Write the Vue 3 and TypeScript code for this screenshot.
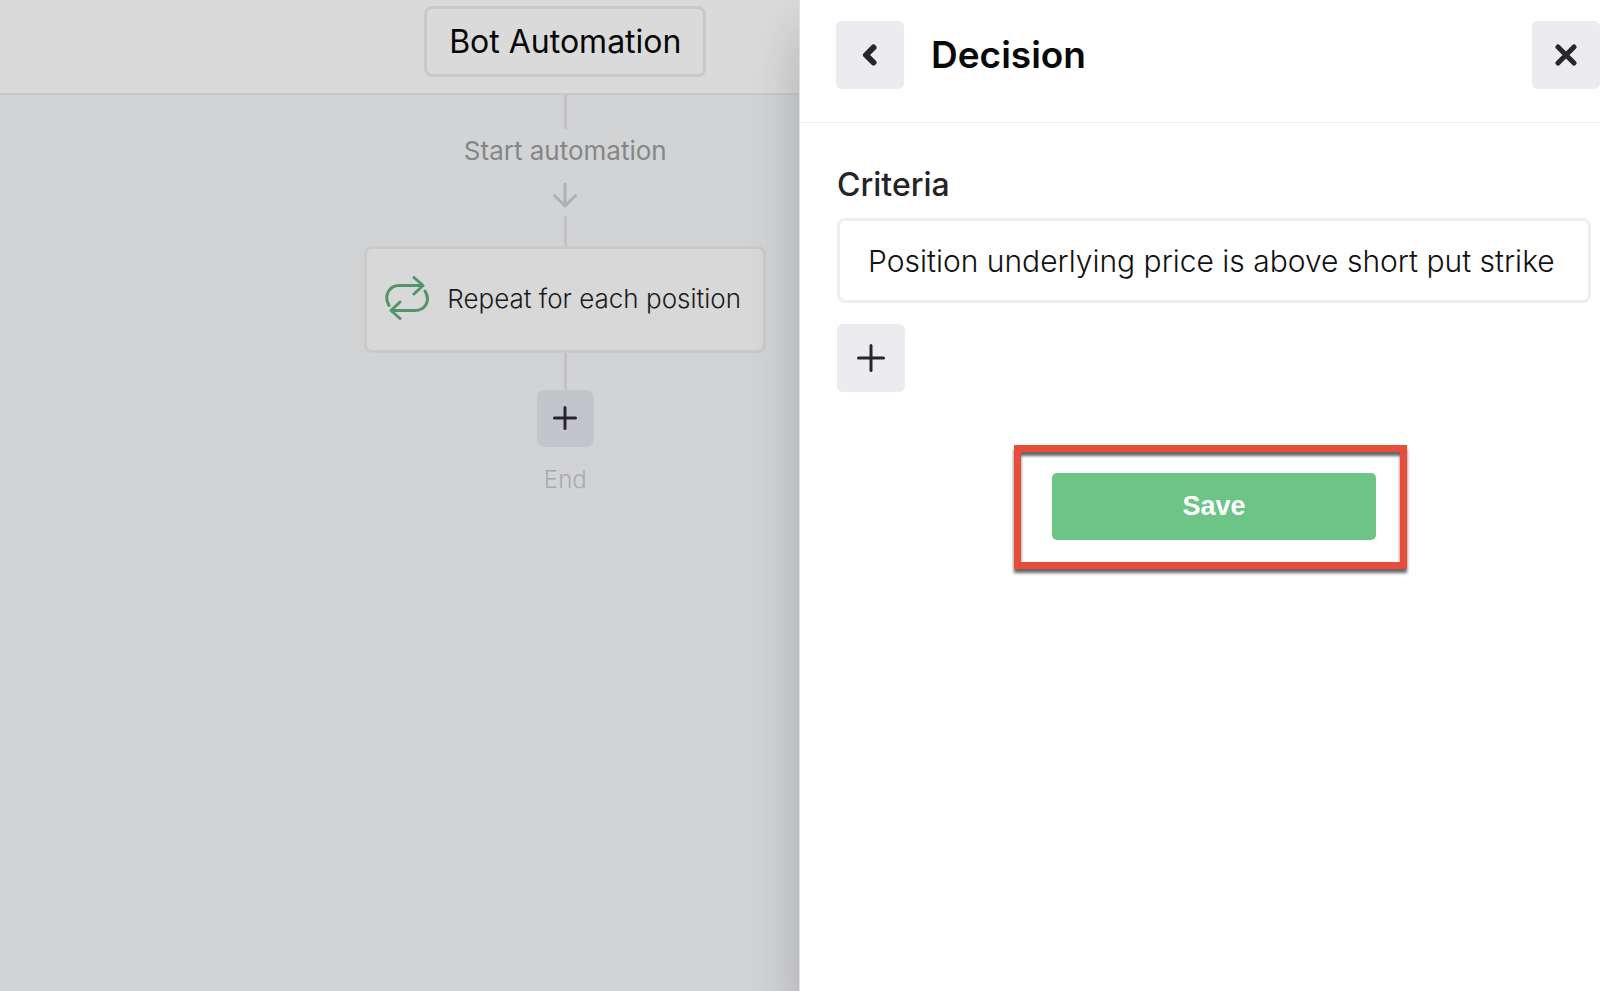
<script setup lang="ts">
import { ref } from 'vue'

const criteria = ref<string>('Position underlying price is above short put strike')
</script>

<template>
  <div class="app">
    <section class="workspace">
      <header class="topbar">
        <button class="bot" type="button">Bot Automation</button>
      </header>
      <div class="flow">
        <span class="line first"></span>
        <span class="start">Start automation</span>
        <svg class="arrow" width="24" height="26" viewBox="0 0 24 26" aria-hidden="true">
          <path d="M12 1V23M1.500 12.500L12 23L22.500 12.500" />
        </svg>
        <span class="line second"></span>
        <button class="card" type="button">
          <svg width="44" height="44" viewBox="0 0 44 44" aria-hidden="true">
            <path d="M4 29.500C-1.500 20 4 9.500 14 9.500H37M29 1.500L38 9.500L29 18M40 15C46 25 40 34.500 30 34.500H6M15 26L6 34.500L15 42.500" />
          </svg>
          <span>Repeat for each position</span>
        </button>
        <span class="line third"></span>
        <button class="add-step" type="button" aria-label="Add step">
          <svg width="24" height="24" viewBox="0 0 24 24" aria-hidden="true">
            <path d="M12 1.500V22.500M1.500 12H22.500" />
          </svg>
        </button>
        <span class="end">End</span>
      </div>
    </section>

    <aside class="drawer">
      <header class="drawer-head">
        <button class="square" type="button" aria-label="Back">
          <svg width="22" height="24" viewBox="0 0 22 24" aria-hidden="true">
            <path class="heavy" d="M14.500 4.500L7 12L14.500 19.500" />
          </svg>
        </button>
        <h1>Decision</h1>
        <button class="square" type="button" aria-label="Close">
          <svg width="22" height="22" viewBox="0 0 22 22" aria-hidden="true">
            <path class="medium" d="M3 3L19 19M19 3L3 19" />
          </svg>
        </button>
      </header>
      <form class="form" @submit.prevent>
        <label for="criteria">Criteria</label>
        <input id="criteria" v-model="criteria" type="text" />
        <button class="square" type="button" aria-label="Add criteria">
          <svg width="28" height="28" viewBox="0 0 28 28" aria-hidden="true">
            <path d="M14 1.500V26.500M1.500 14H26.500" />
          </svg>
        </button>
        <div class="save-area">
          <button class="save" type="submit">Save</button>
          <span class="highlight"></span>
        </div>
      </form>
    </aside>
  </div>
</template>

<style>
body {
  margin: 0;
}
</style>

<style scoped>
.app {
  display: flex;
  min-height: 100vh;
  overflow: hidden;
  background: #d2d3d5;
  font-family: Inter, "Liberation Sans", sans-serif;
}

.app * {
  box-sizing: border-box;
}

button {
  font-family: inherit;
  padding: 0;
  cursor: pointer;
}

svg {
  display: block;
  flex: none;
}

path {
  fill: none;
  stroke: #26272b;
  stroke-width: 3;
  stroke-linecap: round;
  stroke-linejoin: round;
}

.workspace {
  flex: 1;
  min-width: 0;
}

.topbar {
  display: flex;
  justify-content: center;
  height: 95px;
  padding: 6px 0 0 41.5%;
  background: #dadada;
  border-bottom: 2px solid #cbcacb;
}

.bot {
  width: 282px;
  height: 71px;
  border: 3px solid #c9c9c9;
  border-radius: 8px;
  background: transparent;
  color: #060606;
  font-size: 32px;
}

.flow {
  display: flex;
  flex-direction: column;
  align-items: center;
  padding-left: 41.5%;
}

.line {
  width: 3px;
  background: #c3c2c4;
}

.first {
  height: 34px;
}

.second {
  height: 30px;
  margin-top: 7px;
}

.third {
  height: 37px;
}

.start {
  margin-top: 6px;
  color: #858687;
  font-size: 26px;
  line-height: 32px;
}

.arrow {
  margin-top: 16px;
}

.arrow path {
  stroke: #b0b1b3;
}

.card {
  display: flex;
  align-items: center;
  gap: 18px;
  width: 402px;
  height: 107px;
  padding: 0 18px 3px;
  border: 3px solid #cacacb;
  border-radius: 8px;
  background: #d8d8d8;
  color: #1b1b1c;
  font-size: 26px;
  font-weight: 300;
  white-space: nowrap;
}

.card path {
  stroke: #529568;
}

.add-step {
  display: grid;
  place-items: center;
  width: 57px;
  height: 57px;
  padding-bottom: 2px;
  border: 0;
  border-radius: 8px;
  background: #c4c5ca;
}

.end {
  margin-top: 17px;
  color: #a9aaac;
  font-size: 24px;
  font-weight: 300;
  line-height: 32px;
}

.drawer {
  position: relative;
  width: calc(50% + 1px);
  border-left: 1px solid #e0e0e0;
  background: #fff;
  box-shadow: 0 32px 48px rgba(0, 0, 0, 0.2);
}

.drawer-head {
  display: flex;
  align-items: center;
  height: 123px;
  padding: 0 0 13px 36px;
  border-bottom: 1px solid #ececec;
}

h1 {
  flex: 1;
  margin: 0 0 0 27px;
  color: #090909;
  font-size: 37px;
  font-weight: 600;
  line-height: 42px;
}

.square {
  display: grid;
  place-items: center;
  width: 68px;
  height: 68px;
  border: 0;
  border-radius: 6px;
  background: #ebebf0;
}

.heavy {
  stroke-width: 6;
}

.medium {
  stroke-width: 5;
}

.form {
  display: flex;
  flex-direction: column;
  align-items: flex-start;
  padding: 42px 9px 0 37px;
}

label {
  color: #242426;
  font-size: 32px;
  font-weight: 500;
  line-height: 40px;
}

input {
  width: 100%;
  height: 85px;
  margin: 13px 0 21px;
  padding: 0 26px 0 28px;
  border: 3px solid #efefef;
  border-radius: 8px;
  background: #fff;
  color: #111;
  font-family: inherit;
  font-size: 30px;
  font-weight: 300;
}

.save-area {
  position: relative;
  align-self: center;
  margin-top: 81px;
}

.save {
  display: block;
  width: 324px;
  height: 67px;
  border: 0;
  border-radius: 5px;
  background: #6cc487;
  color: #fff;
  font-family: "Liberation Sans", Arial, sans-serif;
  font-size: 27px;
  font-weight: 700;
}

.highlight {
  position: absolute;
  inset: -28px -31px -29px -38px;
  border: 7px solid #e84c3a;
  box-shadow: 0 4px 3px rgba(0, 0, 0, 0.6), inset 0 4px 3px rgba(0, 0, 0, 0.6);
  pointer-events: none;
}
</style>
